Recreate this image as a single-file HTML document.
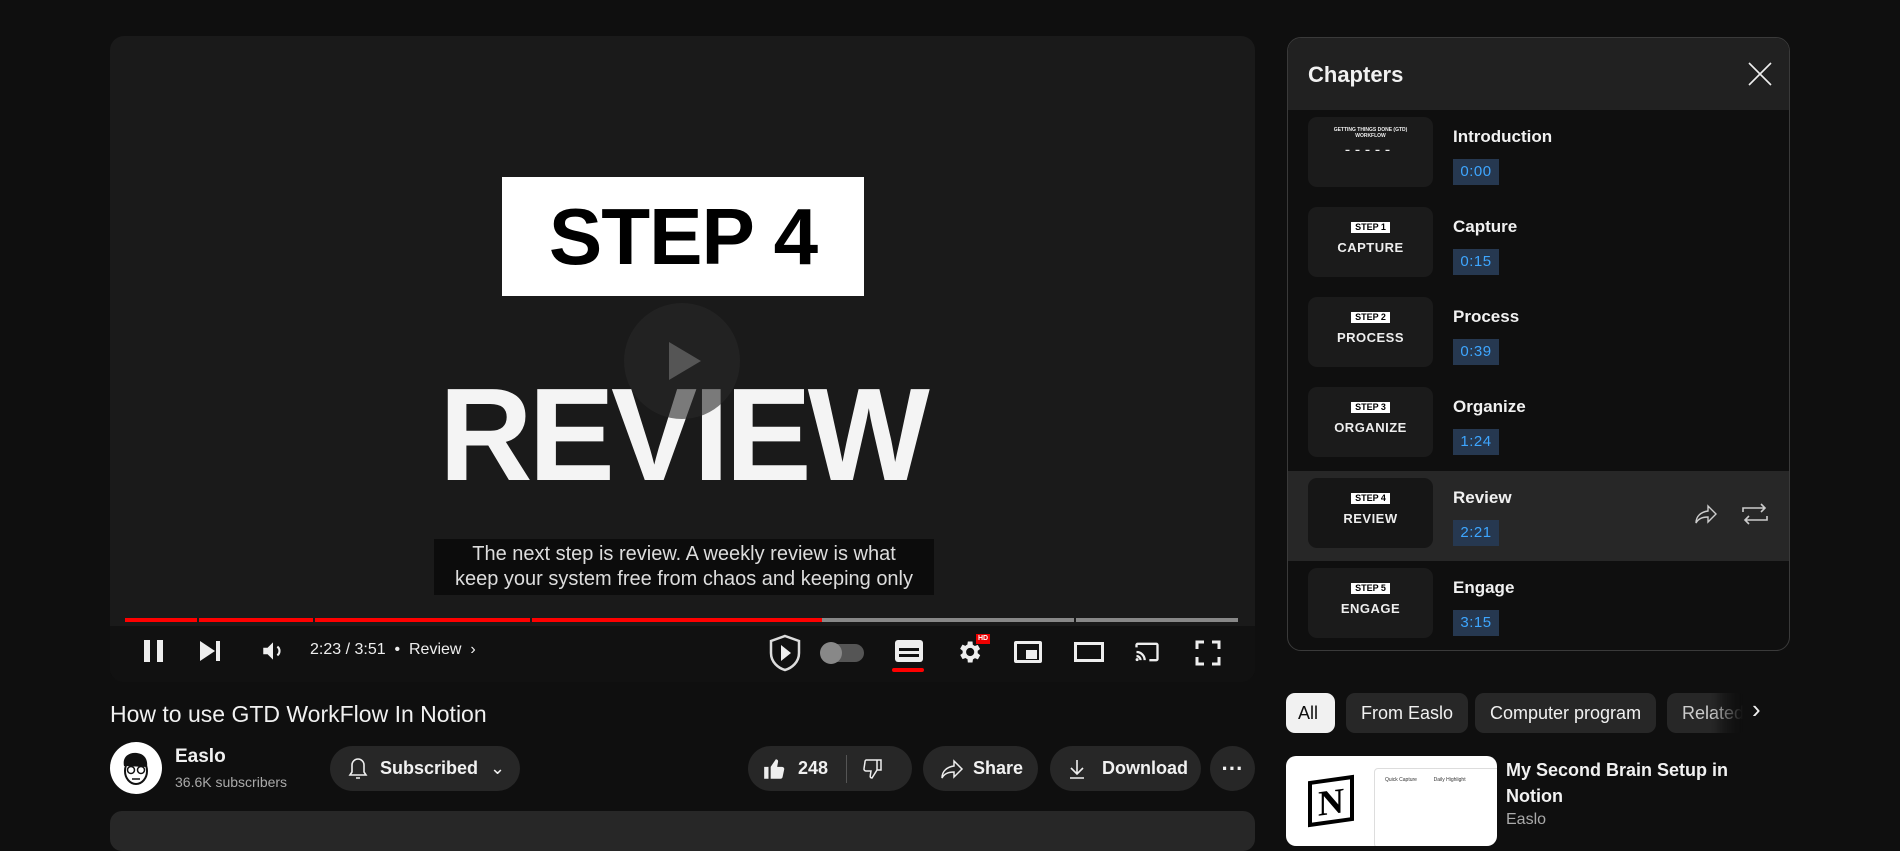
<!DOCTYPE html>
<html><head><style>
*{box-sizing:border-box;margin:0;padding:0}
body{width:1900px;height:830px;background:#0f0f0f;font-family:"Liberation Sans",sans-serif;color:#f1f1f1;position:relative;overflow:hidden}
.abs{position:absolute}
#player{left:110px;top:36px;width:1145px;height:646px;background:#1a1a1a;border-radius:14px;overflow:hidden}
.step{left:392px;top:141px;width:362px;height:119px;background:#fff;color:#000;font-weight:900;font-size:80px;text-align:center;line-height:119px;letter-spacing:-1px}
.review{left:250px;top:324px;width:645px;text-align:center;font-weight:900;font-size:132px;line-height:150px;color:#f4f4f4;letter-spacing:-4px;transform:scaleX(.98)}
.sub{left:324px;top:503px;width:500px;background:rgba(8,8,8,.75);text-align:center;font-size:20px;line-height:25px;color:#ddd;padding:3px 0}
.prog{left:15px;top:582px;height:4px}
.btn{background:#272727;border-radius:23px;height:45px;top:746px;display:flex;align-items:center;font-size:18px;font-weight:bold;color:#f1f1f1}
#ch{left:1287px;top:37px;width:503px;height:614px;border:1px solid #3a3a3a;border-radius:14px;overflow:hidden;background:#0f0f0f}
.hdr{height:72px;background:#212121;font-size:22px;font-weight:bold;padding:24px 20px}
.row{position:absolute;left:0;width:503px;height:90px}
.th{position:absolute;left:20px;top:7px;width:125px;height:70px;background:#1b1b1b;border-radius:9px;text-align:center;color:#eee;font-weight:900}
.th i{display:inline-block;background:#fff;color:#000;font-style:normal;font-size:9px;padding:0 4px;margin-top:15px;line-height:11px}
.th b{display:block;font-size:13px;margin-top:5px;letter-spacing:.5px}
.nm{position:absolute;left:165px;top:17px;font-size:17px;font-weight:bold}
.tm{position:absolute;left:165px;top:49px;width:46px;height:26px;background:#263850;color:#3ea6ff;font-size:15px;line-height:26px;text-align:center;letter-spacing:.5px}
.chip{top:693px;height:40px;border-radius:9px;background:#272727;font-size:18px;line-height:40px;padding:0 15px;color:#f1f1f1}
</style></head><body>
<div id="player" class="abs">
  <div class="abs step">STEP 4</div>
  <div class="abs review">REVIEW</div>
  <div class="abs" style="left:514px;top:267px;width:116px;height:116px;border-radius:50%;background:rgba(40,40,40,.6)"></div>
  <div class="abs" style="left:559px;top:306px;width:0;height:0;border-left:32px solid #555;border-top:19px solid transparent;border-bottom:19px solid transparent"></div>
  <div class="abs sub">The next step is review. A weekly review is what<br>keep your system free from chaos and keeping only</div>
  <div class="abs prog" style="left:15px;width:1113px;background:#888"></div>
  <div class="abs prog" style="left:15px;width:697px;background:#f00"></div>
  <div class="abs" style="left:87px;top:581px;width:2px;height:6px;background:#1a1a1a"></div>
  <div class="abs" style="left:203px;top:581px;width:2px;height:6px;background:#1a1a1a"></div>
  <div class="abs" style="left:420px;top:581px;width:2px;height:6px;background:#1a1a1a"></div>
  <div class="abs" style="left:964px;top:581px;width:2px;height:6px;background:#1a1a1a"></div>
  <div class="abs" style="left:0;top:590px;width:1145px;height:56px;background:#111"></div>
  <div class="abs" style="left:34px;top:604px;width:6px;height:22px;background:#eee"></div>
  <div class="abs" style="left:47px;top:604px;width:6px;height:22px;background:#eee"></div>
  <div class="abs" style="left:90px;top:605px;border-left:15px solid #eee;border-top:10px solid transparent;border-bottom:10px solid transparent"></div>
  <div class="abs" style="left:106px;top:605px;width:4px;height:20px;background:#eee"></div>
  <svg class="abs" style="left:150px;top:602px" width="26" height="26" viewBox="0 0 24 24"><path d="M3 9v6h4l5 5V4L7 9H3z" fill="#eee"/><path d="M16 8a5 5 0 0 1 0 8" stroke="#eee" stroke-width="2" fill="none"/></svg>
  <div class="abs" style="left:200px;top:605px;font-size:16px;color:#eee">2:23 / 3:51 &nbsp;•&nbsp; Review &nbsp;›</div>
  <svg class="abs" style="left:658px;top:598px" width="34" height="38" viewBox="0 0 34 38"><path d="M17 2L31 7v12c0 9-7 15-14 17C10 34 3 28 3 19V7z" fill="#111" stroke="#ddd" stroke-width="2.5"/><path d="M13 11l10 8-10 8z" fill="#eee"/></svg>
  <div class="abs" style="left:712px;top:608px;width:42px;height:18px;border-radius:9px;background:#555"></div>
  <div class="abs" style="left:710px;top:606px;width:22px;height:22px;border-radius:50%;background:#888"></div>
  <div class="abs" style="left:785px;top:604px;width:28px;height:22px;border-radius:3px;background:#eee"></div>
  <div class="abs" style="left:789px;top:612px;width:20px;height:3px;background:#111"></div>
  <div class="abs" style="left:789px;top:618px;width:20px;height:3px;background:#111"></div>
  <div class="abs" style="left:782px;top:632px;width:32px;height:4px;border-radius:2px;background:#f00"></div>
  <svg class="abs" style="left:845px;top:602px" width="28" height="28" viewBox="0 0 24 24"><path fill="#eee" d="M19.4 13a7.5 7.5 0 0 0 0-2l2.1-1.6-2-3.5-2.5 1a7 7 0 0 0-1.7-1L15 3h-4l-.4 2.7a7 7 0 0 0-1.7 1l-2.5-1-2 3.5L6.6 11a7.5 7.5 0 0 0 0 2l-2.1 1.6 2 3.5 2.5-1a7 7 0 0 0 1.7 1L11 21h4l.4-2.7a7 7 0 0 0 1.7-1l2.5 1 2-3.5zM13 15.5a3.5 3.5 0 1 1 0-7 3.5 3.5 0 0 1 0 7z"/></svg>
  <div class="abs" style="left:866px;top:598px;width:14px;height:10px;background:#e00;font-size:7px;color:#fff;text-align:center;line-height:10px;font-weight:bold">HD</div>
  <div class="abs" style="left:904px;top:605px;width:28px;height:22px;border:3px solid #eee;border-radius:2px"></div>
  <div class="abs" style="left:916px;top:614px;width:11px;height:9px;background:#eee"></div>
  <div class="abs" style="left:964px;top:606px;width:30px;height:20px;border:3px solid #eee"></div>
  <svg class="abs" style="left:1022px;top:602px" width="30" height="28" viewBox="0 0 24 24"><path d="M3 8V6a1 1 0 0 1 1-1h16a1 1 0 0 1 1 1v12a1 1 0 0 1-1 1h-6" stroke="#eee" stroke-width="2" fill="none"/><path d="M3 12a7 7 0 0 1 7 7M3 15.5a3.5 3.5 0 0 1 3.5 3.5" stroke="#eee" stroke-width="2" fill="none"/><circle cx="3.5" cy="18.5" r="1.3" fill="#eee"/></svg>
  <svg class="abs" style="left:1085px;top:604px" width="26" height="26" viewBox="0 0 26 26"><path d="M2 9V2h7M17 2h7v7M24 17v7h-7M9 24H2v-7" stroke="#eee" stroke-width="3" fill="none"/></svg>
</div>
<div class="abs" style="left:110px;top:701px;font-size:23px;color:#f1f1f1">How to use GTD WorkFlow In Notion</div>
<div class="abs" style="left:110px;top:742px;width:52px;height:52px;border-radius:50%;background:#fff"></div>
<svg class="abs" style="left:118px;top:748px" width="36" height="42" viewBox="0 0 36 42"><path d="M6 18c-2-10 6-14 13-13 8 1 11 7 10 14" fill="#111"/><ellipse cx="18" cy="23" rx="11" ry="13" fill="none" stroke="#111" stroke-width="2"/><circle cx="13" cy="22" r="3.5" fill="none" stroke="#111" stroke-width="1.5"/><circle cx="23" cy="22" r="3.5" fill="none" stroke="#111" stroke-width="1.5"/><path d="M14 31h8" stroke="#111" stroke-width="1.5"/></svg>
<div class="abs" style="left:175px;top:746px;font-size:19px;font-weight:bold">Easlo</div>
<div class="abs" style="left:175px;top:774px;font-size:14px;color:#aaa">36.6K subscribers</div>
<div class="abs btn" style="left:330px;width:190px"><svg style="margin-left:16px" width="24" height="26" viewBox="0 0 24 26"><path d="M12 3a6 6 0 0 0-6 6v7l-2 3h16l-2-3V9a6 6 0 0 0-6-6zM10 22h4" stroke="#eee" stroke-width="1.6" fill="none"/></svg><span style="margin-left:10px">Subscribed</span><span style="margin-left:12px;font-weight:normal">⌄</span></div>
<div class="abs btn" style="left:748px;width:164px"><svg style="margin-left:14px" width="26" height="26" viewBox="0 0 24 24"><path fill="#eee" d="M2 10h4v11H2zM8 21h9a2 2 0 0 0 2-1.6l1.5-7A2 2 0 0 0 18.5 10H14l.8-4.5A2 2 0 0 0 12.8 3L8 10z"/></svg><span style="margin-left:10px">248</span><span style="margin-left:18px;width:1px;height:28px;background:#555"></span><svg style="margin-left:14px" width="24" height="24" viewBox="0 0 24 24"><path d="M5 3h11v10l-5 8c-1.5 0-2-1-1.7-2.5L10 14H5a2 2 0 0 1-2-2.4L4 5a2 2 0 0 1 1-2zM16 3h4v10h-4" stroke="#eee" stroke-width="1.5" fill="none"/></svg></div>
<div class="abs btn" style="left:923px;width:115px"><svg style="margin-left:16px" width="26" height="24" viewBox="0 0 24 24"><path d="M14 4l8 8-8 8v-5C8 15 4 17 2 21c0-7 5-11 12-12z" stroke="#eee" stroke-width="1.5" fill="none"/></svg><span style="margin-left:8px">Share</span></div>
<div class="abs btn" style="left:1050px;width:151px"><svg style="margin-left:16px" width="22" height="24" viewBox="0 0 22 24"><path d="M11 3v13M5 11l6 6 6-6M4 21h14" stroke="#eee" stroke-width="1.6" fill="none"/></svg><span style="margin-left:14px">Download</span></div>
<div class="abs btn" style="left:1210px;width:45px;justify-content:center;font-size:22px">···</div>
<div class="abs" style="left:110px;top:811px;width:1145px;height:40px;background:#272727;border-radius:12px"></div>

<div id="ch" class="abs">
  <div class="hdr">Chapters</div>
  <svg class="abs" style="left:460px;top:24px" width="24" height="24" viewBox="0 0 24 24"><path d="M1 1l22 22M23 1L1 23" stroke="#eee" stroke-width="1.6"/></svg>
  <div class="row" style="top:72px"><div class="th"><div style="font-size:5px;margin-top:10px">GETTING THINGS DONE (GTD)<br>WORKFLOW</div><div style="font-size:4px;margin-top:8px;letter-spacing:6px">▬▬▬▬▬</div></div><div class="nm">Introduction</div><div class="tm">0:00</div></div>
  <div class="row" style="top:162px"><div class="th"><i>STEP 1</i><b>CAPTURE</b></div><div class="nm">Capture</div><div class="tm">0:15</div></div>
  <div class="row" style="top:252px"><div class="th"><i>STEP 2</i><b>PROCESS</b></div><div class="nm">Process</div><div class="tm">0:39</div></div>
  <div class="row" style="top:342px"><div class="th"><i>STEP 3</i><b>ORGANIZE</b></div><div class="nm">Organize</div><div class="tm">1:24</div></div>
  <div class="row" style="top:433px;background:#272727"><div class="th" style="background:#161616"><i>STEP 4</i><b>REVIEW</b></div><div class="nm">Review</div><div class="tm">2:21</div>
    <svg class="abs" style="left:404px;top:31px" width="28" height="24" viewBox="0 0 24 24"><path d="M14 4l8 8-8 8v-5C8 15 4 17 2 21c0-7 5-11 12-12z" stroke="#ccc" stroke-width="1.4" fill="none"/></svg>
    <svg class="abs" style="left:453px;top:31px" width="28" height="24" viewBox="0 0 28 24"><path d="M2 10V6h22M20 2l4 4-4 4M26 14v4H4M8 22l-4-4 4-4" stroke="#ccc" stroke-width="1.6" fill="none"/></svg>
  </div>
  <div class="row" style="top:523px"><div class="th"><i>STEP 5</i><b>ENGAGE</b></div><div class="nm">Engage</div><div class="tm">3:15</div></div>
</div>

<div class="abs chip" style="left:1286px;width:49px;background:#f1f1f1;color:#0f0f0f;padding:0 12px">All</div>
<div class="abs chip" style="left:1346px">From Easlo</div>
<div class="abs chip" style="left:1475px">Computer program</div>
<div class="abs chip" style="left:1667px;width:80px;overflow:hidden;background:linear-gradient(90deg,#272727 60%,#0f0f0f);color:#ccc;-webkit-mask-image:linear-gradient(90deg,#000 55%,transparent 95%)">Related</div>
<div class="abs" style="left:1752px;top:694px;font-size:26px;color:#eee">›</div>
<div class="abs" style="left:1286px;top:756px;width:211px;height:90px;background:#fff;border-radius:10px;overflow:hidden">
  <div class="abs" style="left:22px;top:22px;width:46px;height:46px;border:4px solid #000;font-family:'Liberation Serif',serif;font-weight:bold;font-size:36px;color:#000;text-align:center;line-height:40px;transform:skewY(-8deg)">N</div>
  <div class="abs" style="left:88px;top:12px;width:130px;height:80px;border:1px solid #ddd;border-radius:4px;font-size:5px;color:#333;padding:8px 10px">Quick Capture &nbsp;&nbsp;&nbsp;&nbsp;&nbsp;&nbsp;&nbsp;&nbsp;&nbsp;&nbsp; Daily Highlight</div>
</div>
<div class="abs" style="left:1506px;top:757px;font-size:18px;font-weight:bold;line-height:26px">My Second Brain Setup in<br>Notion</div>
<div class="abs" style="left:1506px;top:811px;font-size:16px;color:#aaa">Easlo</div>
</body></html>
